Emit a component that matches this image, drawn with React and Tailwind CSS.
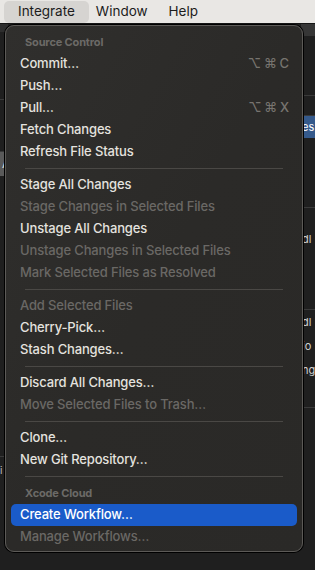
import React from "react";

const items = [
  { type: "header", label: "Source Control" },
  { label: "Commit…", shortcut: "⌥⌘C" },
  { label: "Push…" },
  { label: "Pull…", shortcut: "⌥⌘X" },
  { label: "Fetch Changes" },
  { label: "Refresh File Status" },
  { type: "sep" },
  { label: "Stage All Changes" },
  { label: "Stage Changes in Selected Files", disabled: true },
  { label: "Unstage All Changes" },
  { label: "Unstage Changes in Selected Files", disabled: true },
  { label: "Mark Selected Files as Resolved", disabled: true },
  { type: "sep" },
  { label: "Add Selected Files", disabled: true },
  { label: "Cherry-Pick…" },
  { label: "Stash Changes…" },
  { type: "sep" },
  { label: "Discard All Changes…" },
  { label: "Move Selected Files to Trash…", disabled: true },
  { type: "sep" },
  { label: "Clone…" },
  { label: "New Git Repository…" },
  { type: "sep" },
  { type: "header", label: "Xcode Cloud" },
  { label: "Create Workflow…", active: true },
  { label: "Manage Workflows…", disabled: true },
];

function Shortcut({ keys }) {
  return (
    <span className="flex gap-[3px] text-[#77746f]">
      {keys.split("").map((k, i) => (
        <span key={i}>{k}</span>
      ))}
    </span>
  );
}

function MenuRow({ item }) {
  if (item.type === "sep") {
    return (
      <div className="flex h-[11px] items-center px-[14px]">
        <div className="h-px w-full bg-[#4a4845]" />
      </div>
    );
  }
  if (item.type === "header") {
    return (
      <div className="flex h-[22px] items-center px-[14px] text-[11px] font-bold text-[#6c6a67]">
        {item.label}
      </div>
    );
  }
  return (
    <div
      className={
        "flex h-[22px] items-center justify-between rounded-[5px] pl-[9px] pr-[8px] " +
        (item.active ? "bg-[#1a5bc9] text-white" : item.disabled ? "text-[#6a6865]" : "text-[#e4e2df]")
      }
    >
      <span>{item.label}</span>
      {item.shortcut && <Shortcut keys={item.shortcut} />}
    </div>
  );
}

export default function App() {
  return (
    <div
      className="relative h-[570px] w-[315px] overflow-hidden bg-[#1f1f1f] text-[13px] font-medium tracking-[-0.15px]"
      style={{ fontFamily: "Inter, 'Liberation Sans', sans-serif" }}
    >
      {/* menu bar */}
      <div className="flex h-[24px] items-center border-b border-[#151515] bg-[#e9e7e4] px-[4px] text-[13.5px] font-normal tracking-normal text-[#1c1c1c]">
        <div className="flex h-[22px] items-center rounded-[5px] bg-[#d6d4d1] px-[14px]">Integrate</div>
        <div className="ml-[7px]">Window</div>
        <div className="ml-[21px]">Help</div>
      </div>

      {/* xcode window behind the menu */}
      <div className="flex h-[546px] font-normal tracking-normal">
        <div className="flex w-[8px] flex-col text-[12px] text-[#bdbdbd]">
          <div className="h-[8px] bg-[#2e2e2e]" />
          <div className="h-[68px] border-b border-[#3a3a3a]" />
          <div className="h-[52px] border-b border-[#3a3a3a]" />
          <div className="flex h-[24px] items-center bg-[#5a5a5a] pl-[2px] text-[#e0e0e0]">A</div>
          <div className="h-[280px]" />
          <div className="h-px bg-[#3a3a3a]" />
          <div className="flex h-[26px] items-center text-[10px]">i</div>
        </div>
        <div className="flex-1" />
        <div className="flex w-[14px] flex-col text-[11px] text-[#d0d0d0]">
          <div className="h-[12px] bg-[#363636]" />
          <div className="h-[60px] border-b border-[#3a3a3a]" />
          <div className="h-[20px] border-b border-[#3a3a3a]" />
          <div className="flex h-[22px] items-center bg-[#355a8c] pl-[1px] text-white">es</div>
          <div className="h-[70px] border-b border-[#3a3a3a]" />
          <div className="flex h-[62px] items-center pl-[1px]">dl</div>
          <div className="h-[40px] border-b border-[#3a3a3a]" />
          <div className="flex h-[24px] items-center pl-[1px]">dl</div>
          <div className="flex h-[24px] items-center pl-[1px]">io</div>
          <div className="flex h-[24px] items-center pl-[1px]">ng</div>
          <div className="h-[26px] border-b border-[#3a3a3a]" />
        </div>
      </div>

      {/* dropdown */}
      <div className="absolute left-[5px] top-[25px] w-[298px] rounded-[9px] border border-[#5c5a57] bg-gradient-to-br from-[#302f2d] via-[#2b2a28] to-[#2a2927] px-[5px] pb-[3px] pt-[5px] shadow-[0_0_0_1px_#000]">
        {items.map((item, i) => (
          <MenuRow key={i} item={item} />
        ))}
      </div>
    </div>
  );
}
